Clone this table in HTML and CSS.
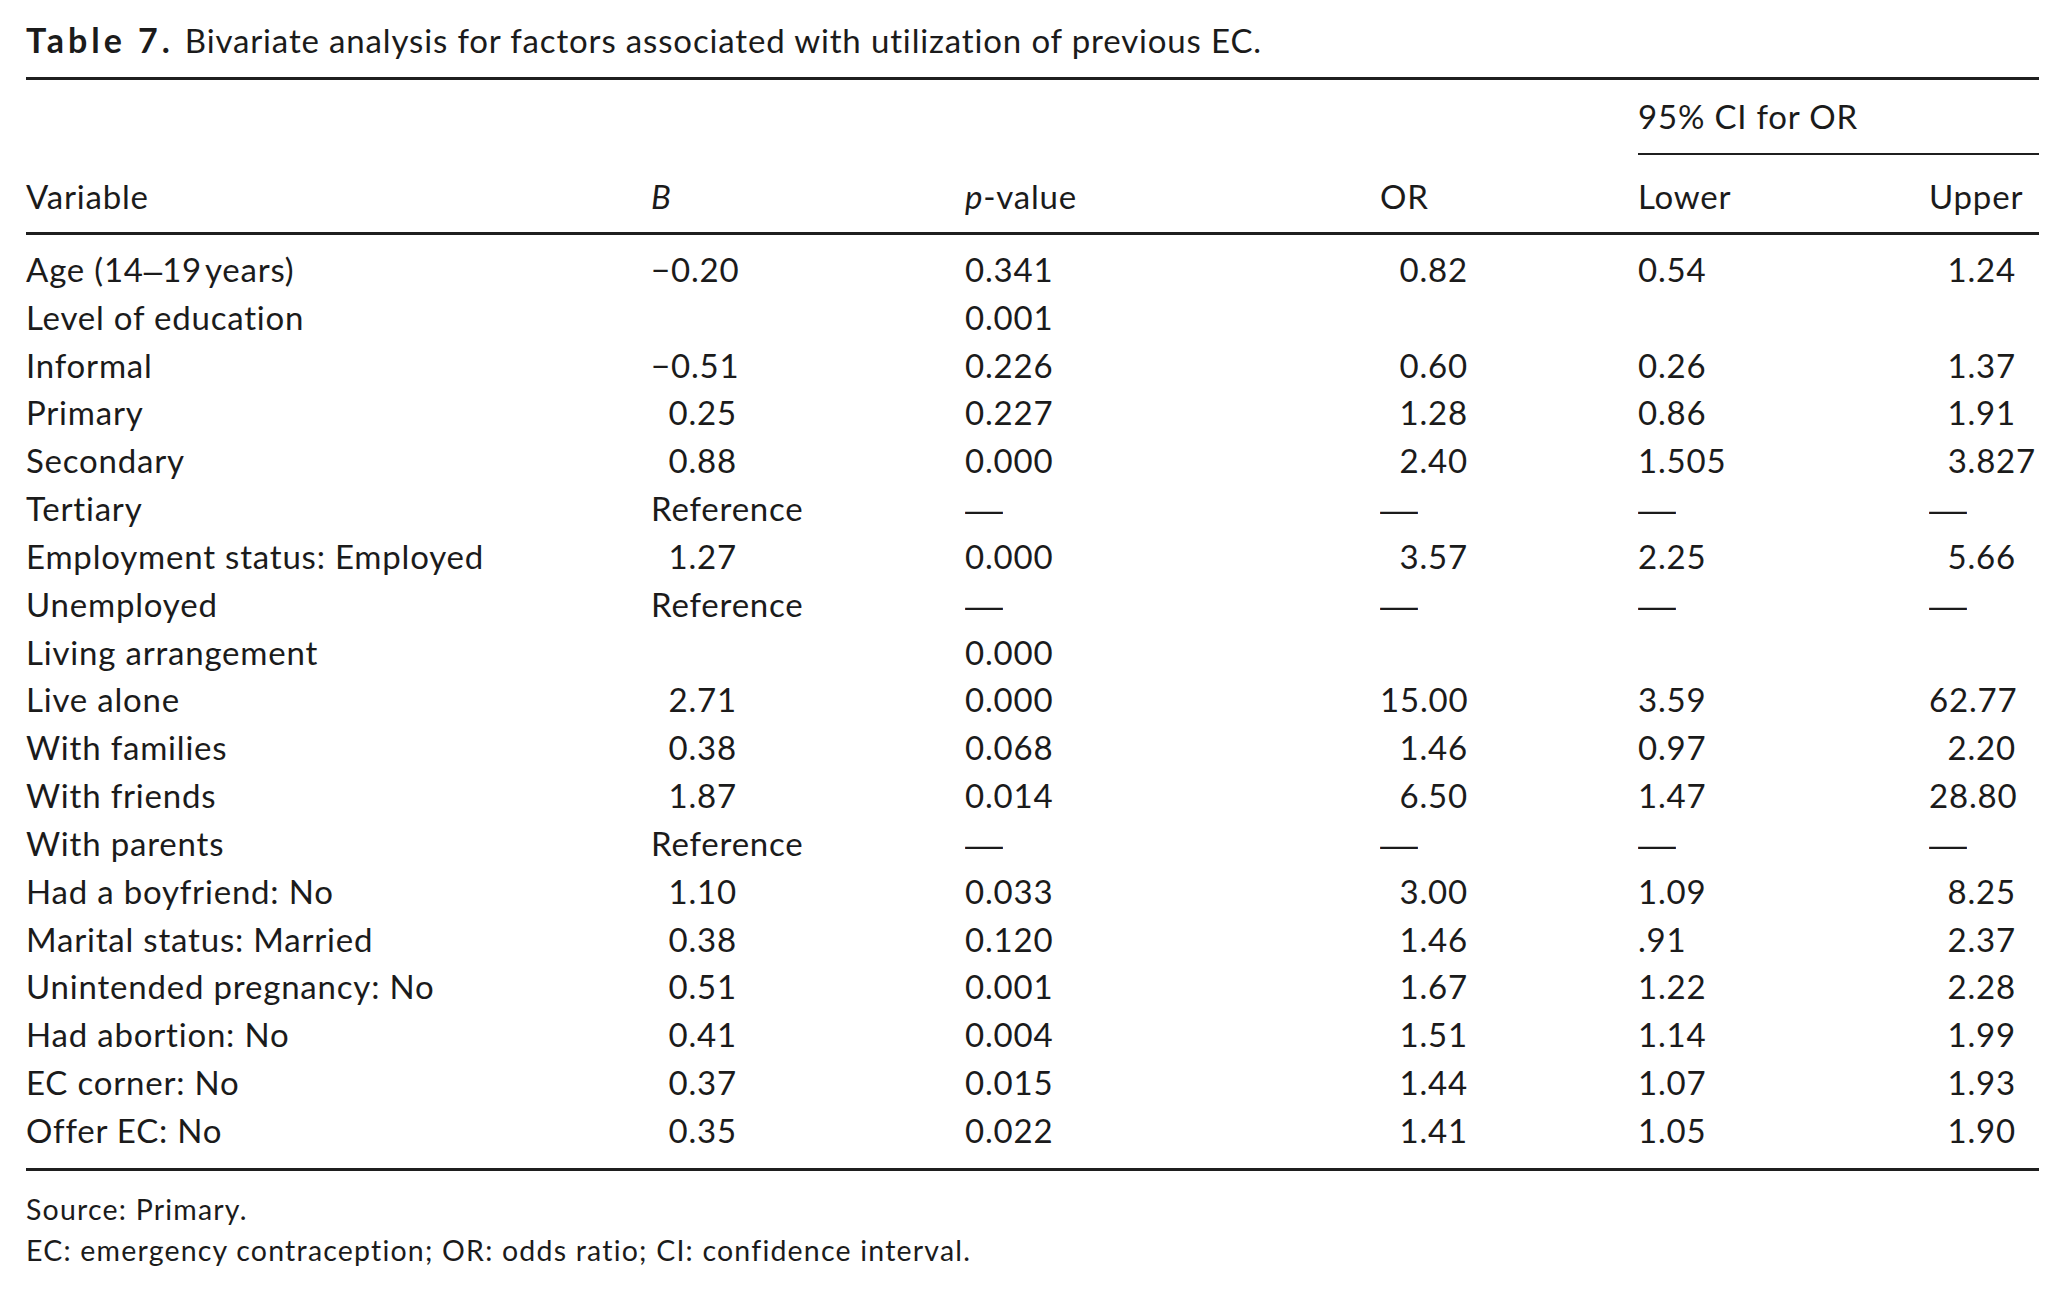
FILE: index.html
```html
<!DOCTYPE html>
<html lang="en">
<head>
<meta charset="utf-8">
<title>Table 7</title>
<link rel="stylesheet" href="styles.css">
</head>
<body>
<div class="page">
  <div class="caption"><span class="label">Table 7.</span>Bivariate analysis for factors associated with utilization of previous EC.</div>
  <div class="tbl">
    <div class="row head-top">
      <div class="c span4"></div>
      <div class="c ci">95% CI for OR</div>
    </div>
    <div class="row head">
      <div class="c">Variable</div>
      <div class="c"><i>B</i></div>
      <div class="c"><i>p</i>-value</div>
      <div class="c">OR</div>
      <div class="c">Lower</div>
      <div class="c">Upper</div>
    </div>
    <div class="body">
      <div class="row"><div class="c">Age (14<span class="en">–</span>19&#8202;years)</div><div class="c"><span class="nb">−0.20</span></div><div class="c">0.341</div><div class="c"><span class="no">0.82</span></div><div class="c">0.54</div><div class="c"><span class="nu">1.24</span></div></div>
      <div class="row"><div class="c">Level of education</div><div class="c"></div><div class="c">0.001</div><div class="c"></div><div class="c"></div><div class="c"></div></div>
      <div class="row"><div class="c">Informal</div><div class="c"><span class="nb">−0.51</span></div><div class="c">0.226</div><div class="c"><span class="no">0.60</span></div><div class="c">0.26</div><div class="c"><span class="nu">1.37</span></div></div>
      <div class="row"><div class="c">Primary</div><div class="c"><span class="nb">0.25</span></div><div class="c">0.227</div><div class="c"><span class="no">1.28</span></div><div class="c">0.86</div><div class="c"><span class="nu">1.91</span></div></div>
      <div class="row"><div class="c">Secondary</div><div class="c"><span class="nb">0.88</span></div><div class="c">0.000</div><div class="c"><span class="no">2.40</span></div><div class="c">1.505</div><div class="c"><span class="nu wide">3.827</span></div></div>
      <div class="row"><div class="c">Tertiary</div><div class="c">Reference</div><div class="c"><span class="dash">—</span></div><div class="c"><span class="dash">—</span></div><div class="c"><span class="dash">—</span></div><div class="c"><span class="dash">—</span></div></div>
      <div class="row"><div class="c">Employment status: Employed</div><div class="c"><span class="nb">1.27</span></div><div class="c">0.000</div><div class="c"><span class="no">3.57</span></div><div class="c">2.25</div><div class="c"><span class="nu">5.66</span></div></div>
      <div class="row"><div class="c">Unemployed</div><div class="c">Reference</div><div class="c"><span class="dash">—</span></div><div class="c"><span class="dash">—</span></div><div class="c"><span class="dash">—</span></div><div class="c"><span class="dash">—</span></div></div>
      <div class="row"><div class="c">Living arrangement</div><div class="c"></div><div class="c">0.000</div><div class="c"></div><div class="c"></div><div class="c"></div></div>
      <div class="row"><div class="c">Live alone</div><div class="c"><span class="nb">2.71</span></div><div class="c">0.000</div><div class="c"><span class="no">15.00</span></div><div class="c">3.59</div><div class="c"><span class="nu">62.77</span></div></div>
      <div class="row"><div class="c">With families</div><div class="c"><span class="nb">0.38</span></div><div class="c">0.068</div><div class="c"><span class="no">1.46</span></div><div class="c">0.97</div><div class="c"><span class="nu">2.20</span></div></div>
      <div class="row"><div class="c">With friends</div><div class="c"><span class="nb">1.87</span></div><div class="c">0.014</div><div class="c"><span class="no">6.50</span></div><div class="c">1.47</div><div class="c"><span class="nu">28.80</span></div></div>
      <div class="row"><div class="c">With parents</div><div class="c">Reference</div><div class="c"><span class="dash">—</span></div><div class="c"><span class="dash">—</span></div><div class="c"><span class="dash">—</span></div><div class="c"><span class="dash">—</span></div></div>
      <div class="row"><div class="c">Had a boyfriend: No</div><div class="c"><span class="nb">1.10</span></div><div class="c">0.033</div><div class="c"><span class="no">3.00</span></div><div class="c">1.09</div><div class="c"><span class="nu">8.25</span></div></div>
      <div class="row"><div class="c">Marital status: Married</div><div class="c"><span class="nb">0.38</span></div><div class="c">0.120</div><div class="c"><span class="no">1.46</span></div><div class="c">.91</div><div class="c"><span class="nu">2.37</span></div></div>
      <div class="row"><div class="c">Unintended pregnancy: No</div><div class="c"><span class="nb">0.51</span></div><div class="c">0.001</div><div class="c"><span class="no">1.67</span></div><div class="c">1.22</div><div class="c"><span class="nu">2.28</span></div></div>
      <div class="row"><div class="c">Had abortion: No</div><div class="c"><span class="nb">0.41</span></div><div class="c">0.004</div><div class="c"><span class="no">1.51</span></div><div class="c">1.14</div><div class="c"><span class="nu">1.99</span></div></div>
      <div class="row"><div class="c">EC corner: No</div><div class="c"><span class="nb">0.37</span></div><div class="c">0.015</div><div class="c"><span class="no">1.44</span></div><div class="c">1.07</div><div class="c"><span class="nu">1.93</span></div></div>
      <div class="row"><div class="c">Offer EC: No</div><div class="c"><span class="nb">0.35</span></div><div class="c">0.022</div><div class="c"><span class="no">1.41</span></div><div class="c">1.05</div><div class="c"><span class="nu">1.90</span></div></div>
    </div>
  </div>
  <div class="notes">
    <p>Source: Primary.</p>
    <p>EC: emergency contraception; OR: odds ratio; CI: confidence interval.</p>
  </div>
</div>
</body>
</html>
```

FILE: styles.css
```css
html, body {
  margin: 0;
  padding: 0;
  background: #ffffff;
}

body {
  font-family: "Lato", "Noto Sans", sans-serif;
  color: #1b1b1b;
}

.page {
  padding: 20px 26px 0 26px;
  width: 2013px;
}

.caption {
  font-size: 33px;
  letter-spacing: 0.85px;
  line-height: 40px;
  height: 40px;
  margin-bottom: 17px;
  white-space: nowrap;
}

.caption .label {
  font-weight: 700;
  font-size: 34px;
  letter-spacing: 4px;
  margin-right: 11px;
}

.tbl {
  border-top: 3px solid #1f1f1f;
  border-bottom: 3px solid #1f1f1f;
  font-size: 33px;
  letter-spacing: 0.8px;
}

.row {
  display: grid;
  grid-template-columns: 625px 314px 415px 258px 291px 110px;
  white-space: nowrap;
}

.head-top {
  line-height: 73px;
}

.span4 {
  grid-column: span 4;
}

.ci {
  grid-column: span 2;
  border-bottom: 2px solid #1f1f1f;
}

.head {
  line-height: 72px;
  padding-top: 5px;
  border-bottom: 3px solid #1f1f1f;
}

.body {
  padding-top: 11px;
  padding-bottom: 13px;
}

.body .row {
  height: 47.83px;
  line-height: 47.83px;
}

.nb,
.no,
.nu {
  display: inline-block;
  text-align: right;
}

.nb { width: 86px; }
.no { width: 88px; }
.nu { width: 87px; }
.nu.wide { width: 107px; }

.dash {
  display: inline-block;
  font-family: "Liberation Sans", sans-serif;
  letter-spacing: 0;
  transform: scaleX(1.15);
  transform-origin: left center;
}

.en {
  font-family: "Liberation Sans", sans-serif;
  letter-spacing: 0;
}

.notes {
  margin-top: 18px;
  font-size: 28.5px;
  letter-spacing: 1.2px;
  line-height: 41px;
}

.notes p {
  margin: 0;
  white-space: nowrap;
}
```
